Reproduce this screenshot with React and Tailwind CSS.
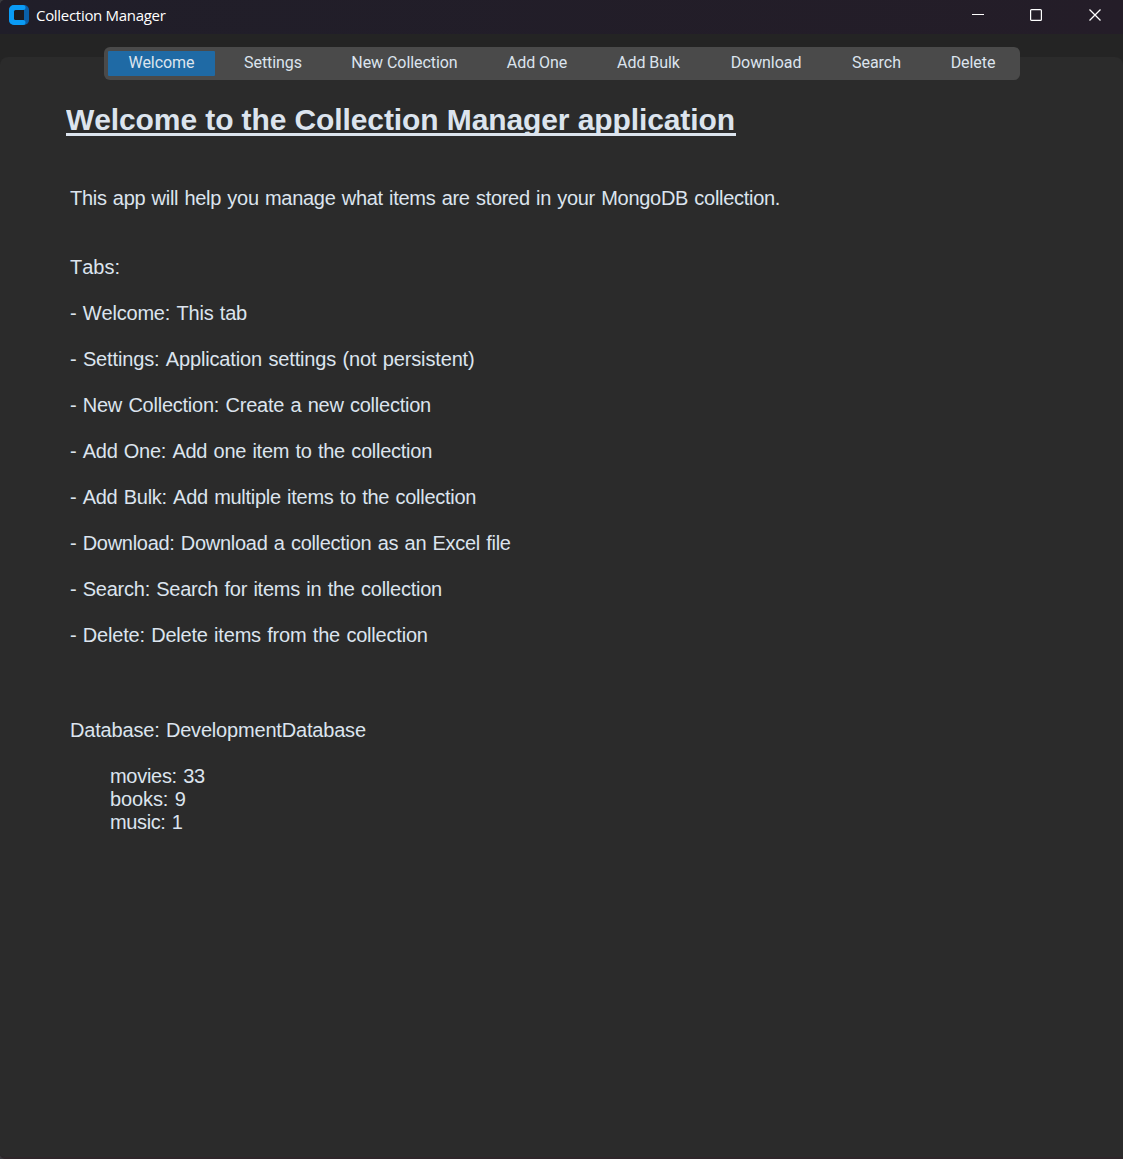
const TABS = [
  ["Welcome", "w-[107px] mr-1 bg-[#1f6aa5]"],
  ["Settings", "w-[108px]"],
  ["New Collection", "w-[155px]"],
  ["Add One", "w-[110px]"],
  ["Add Bulk", "w-[113px]"],
  ["Download", "w-[122px]"],
  ["Search", "w-[99px]"],
  ["Delete", "w-[94px]"],
];

const DESCRIPTIONS = [
  ["Welcome: This tab", "tracking-[-0.2px]"],
  ["Settings: Application settings (not persistent)", "tracking-[-0.15px]"],
  ["New Collection: Create a new collection", "tracking-[-0.235px]"],
  ["Add One: Add one item to the collection", "tracking-[-0.26px]"],
  ["Add Bulk: Add multiple items to the collection", "tracking-[-0.275px]"],
  ["Download: Download a collection as an Excel file", "tracking-[-0.285px]"],
  ["Search: Search for items in the collection", "tracking-[-0.245px]"],
  ["Delete: Delete items from the collection", "tracking-[-0.2px]"],
];

const COUNTS = [
  ["movies: 33", "tracking-[-0.29px]"],
  ["books: 9", "tracking-[-0.1px]"],
  ["music: 1", "tracking-[-0.38px]"],
];

function TitleBar() {
  return (
    <header className="flex h-[34px] items-start justify-between bg-linear-to-r from-[#201e29] to-[#241d28] text-white">
      <div className="flex h-[30px] items-center pl-[9px]">
        <svg width="20" height="20" viewBox="0 0 20 20">
          <rect width="20" height="20" rx="5" fill="#0a5fa8" />
          <path d="M5 0h9a2.500 2.500 0 0 1 0 5v10a2.500 2.500 0 0 1 0 5H5a5 5 0 0 1-5-5V5a5 5 0 0 1 5-5Z" fill="#0a9bf5" />
          <path d="M6.500 5h8.500v10H6.500A1.500 1.500 0 0 1 5 13.500v-7A1.500 1.500 0 0 1 6.500 5Z" fill="#1b1a20" />
        </svg>
        <h1 className="ml-[7px] font-['Open_Sans','Noto_Sans',sans-serif] text-[15px] leading-5 tracking-[-0.3px] whitespace-nowrap">Collection Manager</h1>
      </div>
      <div className="flex h-[30px] items-center pr-[22px]">
        <svg width="12" height="12" viewBox="0 0 12 12" stroke="white"><path d="M0 5.500h12" /></svg>
        <svg className="ml-[46px]" width="12" height="12" viewBox="0 0 12 12" fill="none" stroke="white" strokeWidth="1.200"><rect x=".6" y=".6" width="10.800" height="10.800" rx="1" /></svg>
        <svg className="ml-[47px]" width="12" height="12" viewBox="0 0 12 12" stroke="white" strokeWidth="1.300"><path d="m.5.5 11 11m0-11-11 11" /></svg>
      </div>
    </header>
  );
}

export default function App() {
  return (
    <div className="bg-[#3a3a3f]">
      <div className="flex h-[1159px] w-[1123px] flex-col overflow-hidden rounded-l-[5px] border-b-2 border-[#2e262a] bg-[#242424] font-['Liberation_Sans',sans-serif] text-[#dce4ee]">
        <TitleBar />
        <main className="mt-[23px] flex-1 rounded-t-lg bg-[#2b2b2b]">
          <nav className="mx-auto -mt-[10px] flex h-[33px] w-[916px] rounded-md bg-[#4a4a4a] pt-1 pl-1 font-[Roboto,sans-serif] text-base tracking-[-0.06px]">
            {TABS.map(([name, style]) => (
              <button key={name} className={`${style} flex h-[25px] shrink-0 justify-center rounded-[1px] pl-px leading-6 whitespace-nowrap`}>
                {name}
              </button>
            ))}
          </nav>
          <section className="text-[20px] leading-[23px] [word-spacing:1px] [font-kerning:none]">
            <h2 className="mt-[22px] ml-[66px] h-[34px] w-[670px] overflow-hidden border-b-[3px] border-[#dce4ee] text-[30px] leading-[35px] font-bold tracking-[-0.1px] whitespace-nowrap [word-spacing:0px]">
              Welcome to the Collection Manager application
            </h2>
            <p className="mt-[51px] ml-[70px] tracking-[-0.295px]">This app will help you manage what items are stored in your MongoDB collection.</p>
            <p className="mt-[46px] ml-[70px]">Tabs:</p>
            <ul className="mt-[23px] ml-[70px] flex flex-col gap-[23px]">
              {DESCRIPTIONS.map(([text, style]) => <li key={text} className={style}>- {text}</li>)}
            </ul>
            <p className="mt-[72px] ml-[70px] tracking-[-0.185px]">Database: DevelopmentDatabase</p>
            <ul className="mt-[23px] ml-[110px]">
              {COUNTS.map(([text, style]) => <li key={text} className={style}>{text}</li>)}
            </ul>
          </section>
        </main>
      </div>
    </div>
  );
}
